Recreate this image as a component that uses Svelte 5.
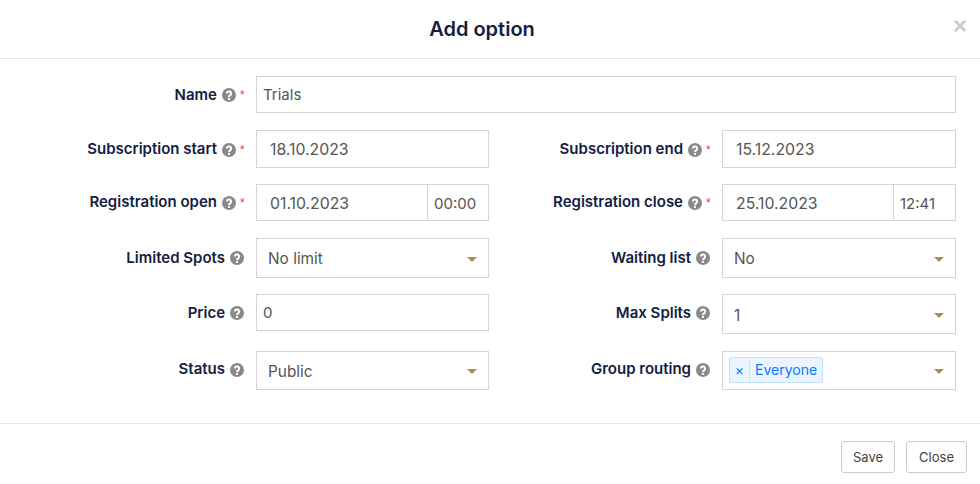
<script>
	const help = 'M4.9 5.5a2.1 2.1 0 1 1 3.2 1.8c-.8.5-1.1.9-1.1 1.6';
</script>

{#snippet hint()}
	<svg class="hint" width="14" height="14" viewBox="0 0 14 14" aria-hidden="true">
		<circle cx="7" cy="7" r="7" fill="#8a8a8a" />
		<path d={help} fill="none" stroke="#fff" stroke-width="2" />
		<rect x="6" y="9.9" width="2" height="2" fill="#fff" />
	</svg>
{/snippet}

{#snippet label(text, required)}
	<div class="label" class:plain={!required}>
		<span>{text}</span>
		{@render hint()}
		{#if required}<i class="star">*</i>{/if}
	</div>
{/snippet}

{#snippet select(value, short = false)}
	<div class="control select" class:short>
		<span>{value}</span>
		<b class="caret"></b>
	</div>
{/snippet}

<div class="modal">
	<header class="head">
		<h4>Add option</h4>
		<button class="dismiss" type="button">×</button>
	</header>

	<form class="body">
		<div class="row wide">
			{@render label('Name', true)}
			<div class="control text h37">Trials</div>
		</div>

		<div class="row tall">
			{@render label('Subscription start', true)}
			<div class="control date h38">18.10.2023</div>
			{@render label('Subscription end', true)}
			<div class="control date h38">15.12.2023</div>
		</div>

		<div class="row tight">
			{@render label('Registration open', true)}
			<div class="control stamp h37">
				<div class="date">01.10.2023</div>
				<div class="time">00:00</div>
			</div>
			{@render label('Registration close', true)}
			<div class="control stamp h37">
				<div class="date">25.10.2023</div>
				<div class="time">12:41</div>
			</div>
		</div>

		<div class="row taller">
			{@render label('Limited Spots', false)}
			{@render select('No limit')}
			{@render label('Waiting list', false)}
			{@render select('No')}
		</div>

		<div class="row">
			{@render label('Price', false)}
			<div class="control text h37">0</div>
			{@render label('Max Splits', false)}
			{@render select('1', true)}
		</div>

		<div class="row">
			{@render label('Status', false)}
			{@render select('Public', true)}
			{@render label('Group routing', false)}
			<div class="control select chips">
				<div class="chip">
					<span class="chip-x">×</span>
					<span class="chip-text">Everyone</span>
				</div>
				<b class="caret"></b>
			</div>
		</div>
	</form>

	<footer class="foot">
		<button type="button">Save</button>
		<button type="button">Close</button>
	</footer>
</div>

<style>
	:global(body) {
		margin: 0;
		background: #fff;
		font-family: Inter, 'Open Sans', sans-serif;
		color: #555;
	}

	.modal {
		width: 980px;
		height: 484px;
		overflow: hidden;
	}

	.head {
		position: relative;
		height: 58px;
		display: flex;
		align-items: center;
		justify-content: center;
		padding-right: 16px;
		border-bottom: 1px solid #e5e5e5;
	}

	h4 {
		margin: 0;
		font-size: 20px;
		font-weight: 600;
		color: #13203f;
	}

	.dismiss {
		position: absolute;
		top: 10px;
		right: 13px;
		padding: 0;
		border: 0;
		background: none;
		font: bold 24px/32px 'Liberation Sans', sans-serif;
		color: #ccc;
	}

	.body {
		display: grid;
		row-gap: 16.5px;
		padding: 17px 24px 0 0;
		height: 347px;
		align-content: start;
	}

	.row {
		display: grid;
		grid-template-columns: 256px 233px 233px 234px;
		align-items: start;
	}

	.wide {
		grid-template-columns: 256px 700px;
	}

	.label {
		display: flex;
		align-items: center;
		justify-content: flex-end;
		gap: 5px;
		height: 36px;
		padding-right: 11px;
		font-size: 15px;
		font-weight: 600;
		color: #13203f;
		white-space: nowrap;
	}

	.tall .label {
		height: 38px;
	}

	.tight .label {
		height: 35px;
	}

	.taller .label {
		height: 39px;
	}

	.plain {
		padding-right: 12px;
	}

	.hint {
		margin-top: 2px;
	}

	.star {
		font: normal 12px/1 'Liberation Sans', sans-serif;
		color: #f33;
		margin-left: -1px;
		width: 5px;
		height: 8px;
		margin-top: -2px;
	}

	.control {
		box-sizing: border-box;
		border: 1px solid #d5d5d5;
		background: #fff;
		font-size: 15.8px;
		color: #555;
	}

	.h37 {
		height: 37px;
	}

	.h38 {
		height: 38px;
	}

	.text {
		display: flex;
		align-items: center;
		padding-left: 6px;
		font-size: 15px;
	}

	.date {
		display: flex;
		align-items: center;
		padding-left: 13px;
		padding-top: 1px;
	}

	.stamp {
		display: grid;
		grid-template-columns: 170px 1fr;
	}

	.time {
		display: flex;
		align-items: center;
		padding-left: 6px;
		padding-top: 1px;
		border-left: 1px solid #d5d5d5;
		font-size: 15px;
	}

	.select {
		display: flex;
		align-items: center;
		justify-content: space-between;
		height: 40px;
		padding: 1px 11px 0 11px;
		font-size: 15.4px;
	}

	.short {
		height: 39px;
		padding-top: 2px;
	}

	.short .caret {
		margin-top: 0;
	}

	.row:nth-child(5) .select {
		height: 40px;
	}

	.caret {
		width: 0;
		height: 0;
		margin-top: 2px;
		border-style: solid;
		border-width: 5px 5px 0;
		border-color: #a88c5a transparent transparent;
	}

	.chips {
		height: 39px;
		padding-left: 6px;
		padding-top: 0;
	}

	.chip {
		display: flex;
		height: 26px;
		box-sizing: border-box;
		border: 1px solid #c2e0ff;
		border-radius: 2px;
		background: #ebf5ff;
		color: #007eff;
		font-size: 14px;
		line-height: 24px;
	}

	.chip-x {
		width: 19px;
		text-align: center;
		border-right: 1px solid #c2e0ff;
	}

	.chip-text {
		padding: 0 5px;
	}

	.foot {
		display: flex;
		justify-content: flex-end;
		gap: 11px;
		padding: 17px 13px 0 0;
		border-top: 1px solid #e5e5e5;
	}

	.foot button {
		height: 32px;
		padding: 0 12px;
		border: 1px solid #ccc;
		border-radius: 3px;
		background: #fff;
		font: 13px Inter, sans-serif;
		color: #444;
	}

	.foot button:first-child {
		padding: 0 11px;
	}
</style>
